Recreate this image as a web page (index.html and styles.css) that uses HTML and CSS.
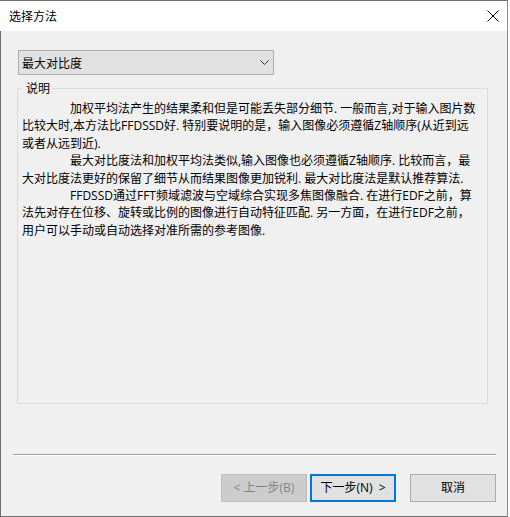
FILE: index.html
```html
<!DOCTYPE html>
<html lang="zh-CN">
<head>
<meta charset="utf-8">
<title>选择方法</title>
<link rel="stylesheet" href="styles.css">
</head>
<body>
<div class="window">
  <div class="titlebar">
    <span class="title">选择方法</span>
    <svg class="close" width="12" height="12" viewBox="0 0 12 12"><path d="M0.5 0.5 L11.5 11.5 M11.5 0.5 L0.5 11.5" stroke="#000" stroke-width="1" fill="none"/></svg>
  </div>
  <div class="content">
    <div class="main">
      <div class="select">
        <span>最大对比度</span>
        <svg class="chev" width="9" height="5" viewBox="0 0 9 5"><path d="M0.5 0.5 L4.5 4.5 L8.5 0.5" stroke="#333" stroke-width="1" fill="none"/></svg>
      </div>
      <fieldset class="group">
        <legend>说明</legend>
        <p class="desc">
          <span class="line indent">加权平均法产生的结果柔和但是可能丢失部分细节. 一般而言,对于输入图片数</span>
          <span class="line">比较大时,本方法比FFDSSD好. 特别要说明的是，输入图像必须遵循Z轴顺序(从近到远</span>
          <span class="line">或者从远到近).</span>
          <span class="line indent">最大对比度法和加权平均法类似,输入图像也必须遵循Z轴顺序. 比较而言，最</span>
          <span class="line">大对比度法更好的保留了细节从而结果图像更加锐利. 最大对比度法是默认推荐算法.</span>
          <span class="line indent">FFDSSD通过FFT频域滤波与空域综合实现多焦图像融合. 在进行EDF之前，算</span>
          <span class="line">法先对存在位移、旋转或比例的图像进行自动特征匹配. 另一方面，在进行EDF之前，</span>
          <span class="line">用户可以手动或自动选择对准所需的参考图像.</span>
        </p>
      </fieldset>
    </div>
    <div class="footer">
      <div class="separator"></div>
      <div class="buttons">
        <button class="btn disabled" disabled>&lt; 上一步(B)</button>
        <button class="btn focused">下一步(N)&nbsp;&nbsp;&gt;</button>
        <button class="btn cancel">取消</button>
      </div>
    </div>
  </div>
</div>
</body>
</html>
```

FILE: styles.css
```css
html, body {
  margin: 0;
  padding: 0;
  background: #ffffff;
}
body {
  font-family: "Open Sans", "Noto Sans CJK SC", sans-serif;
  font-size: 12px;
  color: #000;
}
.window {
  width: 508px;
  height: 517px;
  box-sizing: border-box;
  border-top: 1px solid #6e6e6e;
  border-bottom: 1px solid #6e6e6e;
  border-right: 1px solid #8c8c8c;
  display: flex;
  flex-direction: column;
}
.titlebar {
  height: 30px;
  flex: none;
  background: #fff;
  display: flex;
  align-items: center;
  justify-content: space-between;
  padding: 0 8px 0 9px;
}
.title {
  font-family: "Noto Sans CJK SC", sans-serif;
  font-size: 12px;
  line-height: 14px;
}
.close {
  display: block;
}
.content {
  flex: 1;
  background: #f0f0f0;
  border-left: 1px solid #6e6e6e;
  display: flex;
  flex-direction: column;
}
.main {
  padding: 19px 19px 0 16px;
}
.select {
  margin-left: 1px;
  width: 256px;
  height: 25px;
  box-sizing: border-box;
  background: #e1e1e1;
  border: 1px solid #adadad;
  display: flex;
  align-items: center;
  justify-content: space-between;
  padding: 0 4px 0 3px;
  line-height: 14px;
}
.select span {
  font-family: "Noto Sans CJK SC", sans-serif;
}
.chev {
  display: block;
  margin-bottom: 1px;
}
.group {
  margin: 6px 0 0 0;
  padding: 0 4px 0 4px;
  border: 1px solid #dcdcdc;
  height: 323px;
  box-sizing: border-box;
  min-width: 0;
}
.group legend {
  margin-left: 0;
  padding: 0 2px 0 4px;
  line-height: 14px;
  font-family: "Noto Sans CJK SC", sans-serif;
}
.desc {
  margin: 5px 0 0 0;
  line-height: 17.4px;
}
.line {
  display: block;
  white-space: nowrap;
}
.indent {
  padding-left: 48px;
}
.footer {
  margin-top: auto;
  padding-bottom: 14px;
}
.separator {
  margin: 0 11px 0 12px;
  height: 1px;
  background: #a0a0a0;
  border-bottom: 1px solid #ffffff;
}
.buttons {
  margin-top: 18px;
  display: flex;
  justify-content: flex-end;
  padding-right: 11px;
}
.btn {
  width: 86px;
  height: 28px;
  box-sizing: border-box;
  font-family: "Open Sans", "Noto Sans CJK SC", sans-serif;
  font-size: 12px;
  line-height: 14px;
  padding: 0;
  background: #e1e1e1;
  border: 1px solid #adadad;
  color: #000;
}
.btn.disabled {
  background: #cccccc;
  border-color: #bfbfbf;
  color: #838383;
}
.btn.focused {
  margin-left: 3px;
  border: 2px solid #0078d7;
}
.btn.cancel {
  margin-left: 14px;
}
```
